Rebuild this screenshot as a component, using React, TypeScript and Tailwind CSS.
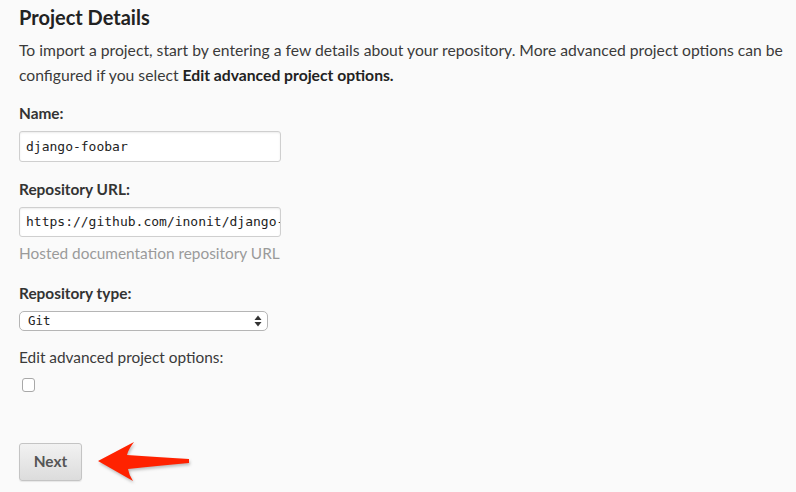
import React from "react";

const sans = { fontFamily: "Lato, 'Open Sans', sans-serif" };
const mono = { fontFamily: "'DejaVu Sans Mono', monospace" };

export default function App() {
  return (
    <div className="w-[796px] h-[492px] bg-[#fafafa] overflow-hidden relative" style={sans}>
      <div className="pl-[19px] flex flex-col items-start">
        <div className="h-[34px] leading-[34px] text-[20px] font-bold text-[#222]">Project Details</div>
        <p className="mt-[4px] leading-[25px] text-[15.7px] text-[#3a3a3a] pr-[4px]">
          To import a project, start by entering a few details about your repository. More advanced project options can be configured if you select <b className="text-[#222]">Edit advanced project options.</b>
        </p>
        <div className="mt-[15px] leading-[20px] text-[15.4px] font-bold text-[#333]">Name:</div>
        <div className="mt-[8px] w-[262px] h-[31px] bg-white border border-[#cfcfcf] rounded-[3px] shadow-[inset_0_1px_2px_rgba(0,0,0,0.08)] flex items-center pl-[6px] text-[13px] text-[#222] overflow-hidden whitespace-nowrap" style={mono}>
          django-foobar
        </div>
        <div className="mt-[17px] leading-[20px] text-[15.4px] font-bold text-[#333]">Repository URL:</div>
        <div className="mt-[8px] w-[262px] h-[30px] bg-white border border-[#cfcfcf] rounded-[3px] shadow-[inset_0_1px_2px_rgba(0,0,0,0.08)] flex items-center pl-[6px] text-[13px] text-[#222] overflow-hidden whitespace-nowrap" style={mono}>
          https://github.com/inonit/django-foobar.git
        </div>
        <div className="mt-[6px] leading-[20px] text-[15.4px] text-[#9a9a9a]">Hosted documentation repository URL</div>
        <div className="mt-[20px] leading-[20px] text-[15.4px] font-bold text-[#333]">Repository type:</div>
        <div className="mt-[8px] w-[249px] h-[20px] bg-white border border-[#b5b5b5] rounded-[5px] flex items-center justify-between pl-[8px] pr-[5px] text-[12.5px] text-[#222]" style={mono}>
          <span>Git</span>
          <svg width="8" height="12" viewBox="0 0 8 12">
            <path d="M4 0.5 L7.5 5 L0.5 5 Z" fill="#333" />
            <path d="M4 11.5 L7.5 7 L0.5 7 Z" fill="#333" />
          </svg>
        </div>
        <div className="mt-[16px] leading-[20px] text-[15.4px] text-[#3a3a3a]">Edit advanced project options:</div>
        <div className="mt-[11px] ml-[3px] w-[13px] h-[14px] bg-white border border-[#a8a8a8] rounded-[3px]" />
        <div className="mt-[51px] flex items-start">
          <div className="w-[63px] h-[38px] rounded-[3px] border border-[#c4c4c4] bg-gradient-to-b from-[#f2f2f2] to-[#dcdcdc] shadow-[0_1px_1px_rgba(0,0,0,0.08)] flex items-center justify-center text-[15.4px] font-bold text-[#555]">
            Next
          </div>
          <svg className="ml-[14px] -mt-[2px]" width="98" height="46" viewBox="0 0 98 46" style={{ filter: "drop-shadow(1px 2px 1.5px rgba(0,0,0,0.25))" }}>
            <path d="M2 20 L38 1 Q32 9 31 14 Q60 16 93 18 L93 22 Q60 25 32 28 Q33 34 37 40 Z" fill="#ff2200" />
          </svg>
        </div>
      </div>
    </div>
  );
}
